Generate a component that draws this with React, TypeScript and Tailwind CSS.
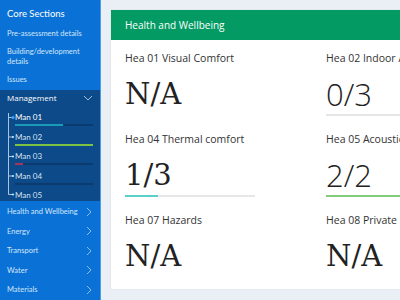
import React from "react";

const font = { fontFamily: '"Open Sans", "Noto Sans", sans-serif' };
const side = { fontFamily: 'Lato, "Open Sans", sans-serif' };

function ChevronRight() {
  return (
    <svg width="6" height="10" viewBox="0 0 6 10" className="shrink-0">
      <path d="M1 1 L5 5 L1 9" fill="none" stroke="#8dbbea" strokeWidth="1" />
    </svg>
  );
}

function ChevronDown() {
  return (
    <svg width="10" height="6" viewBox="0 0 10 6" className="shrink-0">
      <path d="M1 1 L5 5 L9 1" fill="none" stroke="#9fbfe0" strokeWidth="1" />
    </svg>
  );
}

const subs = [
  { name: "Man 01", fill: 48, color: "#1a9cb8", active: true },
  { name: "Man 02", fill: 78, color: "#7dc242" },
  { name: "Man 03", fill: 8, color: "#a5335a" },
  { name: "Man 04", fill: 0, color: "#000" },
  { name: "Man 05", fill: -1, color: "#000" },
];

const sections = ["Health and Wellbeing", "Energy", "Transport", "Water", "Materials"];

type Cell = { title: string; value: string; serif: boolean; bar?: { pct: number; color: string } };

const cells: Cell[] = [
  { title: "Hea 01 Visual Comfort", value: "N/A", serif: true },
  { title: "Hea 02 Indoor Air Quality", value: "0/3", serif: false, bar: { pct: 0, color: "#5ccfc8" } },
  { title: "Hea 04 Thermal comfort", value: "1/3", serif: true, bar: { pct: 25, color: "#5ccfc8" } },
  { title: "Hea 05 Acoustic performance", value: "2/2", serif: false, bar: { pct: 100, color: "#83cc7e" } },
  { title: "Hea 07 Hazards", value: "N/A", serif: true },
  { title: "Hea 08 Private space", value: "N/A", serif: true },
];

export default function App() {
  return (
    <div className="w-[400px] h-[300px] flex overflow-hidden bg-[#e9eff4]" style={font}>
      <aside className="w-[101px] shrink-0 h-full bg-[#0a72d6] border-r border-[#4f9ce4] flex flex-col text-white" style={side}>
        <div className="mt-[7px] pl-[7px] text-[9.5px] leading-[14px] text-white">Core Sections</div>
        <div className="mt-[7px] pl-[7px] text-[7.5px] leading-[12px] text-[#d3e5f8]">Pre-assessment details</div>
        <div className="mt-[7px] pl-[7px] text-[7.5px] leading-[10px] text-[#d3e5f8]">
          Building/development
          <br />
          details
        </div>
        <div className="mt-[7px] pl-[7px] text-[7.5px] leading-[12px] text-[#d3e5f8]">Issues</div>
        <div className="mt-[4px] bg-[#0c4a89] flex flex-col">
          <div className="h-[16px] pl-[7px] pr-[7px] flex items-center justify-between">
            <span className="text-[8px] text-white" style={font}>Management</span>
            <ChevronDown />
          </div>
          <div className="relative mt-[5px] pl-[15px] pr-[7px]">
            <svg className="absolute left-0 top-0" width="16" height="100" viewBox="0 0 16 100">
              <path d="M8.5 2 L8.5 83.5 M8.5 6.5 L13 6.5 M8.5 26 L13 26 M8.5 45.5 L13 45.5 M8.5 65 L13 65 M8.5 83.5 L13 83.5" stroke="#a9c3e0" strokeWidth="1" fill="none" />
              <circle cx="13" cy="6.5" r="1.6" fill="#3aa0ff" />
              <circle cx="13" cy="26" r="1" fill="#dbe8f6" />
              <circle cx="13" cy="45.5" r="1" fill="#dbe8f6" />
              <circle cx="13" cy="65" r="1" fill="#dbe8f6" />
              <circle cx="13" cy="83.5" r="1" fill="#dbe8f6" />
            </svg>
            {subs.map((s) => (
              <div key={s.name} className={s.fill >= 0 ? "mb-[4.5px]" : ""}>
                <div className={"text-[8px] leading-[12px] " + (s.active ? "text-white" : "text-[#d3e2f2]")}>{s.name}</div>
                {s.fill >= 0 && (
                  <div className="mt-[1px] h-[2px] w-[78px] bg-[#0a3a6e]">
                    <div className="h-full" style={{ width: s.fill, background: s.color }} />
                  </div>
                )}
              </div>
            ))}
          </div>
        </div>
        <div className="mt-[1px] flex flex-col">
          {sections.map((s) => (
            <div key={s} className="h-[19.5px] pl-[7px] pr-[8px] flex items-center justify-between">
              <span className="text-[7.5px] text-[#d3e5f8]">{s}</span>
              <ChevronRight />
            </div>
          ))}
        </div>
      </aside>
      <main className="flex-1 pl-[10px] pt-[10px] min-w-0">
        <div className="w-[420px] h-[279px] bg-white shadow-[0_0_1px_rgba(0,0,0,0.15)]">
          <div className="h-[30px] bg-[#039b63] flex items-center pl-[14px] text-white text-[10px]">Health and Wellbeing</div>
          <div className="pt-[11px] pl-[14px] grid grid-cols-[201px_201px]">
            {cells.map((c) => (
              <div key={c.title} className="h-[81px] flex flex-col">
                <div className="text-[10.5px] leading-[14px] text-[#333] whitespace-nowrap">{c.title}</div>
                <div
                  className={
                    "mt-[12px] h-[34px] leading-[34px] text-[#222] whitespace-nowrap " +
                    (c.serif ? "text-[29px]" : "text-[31px] font-light")
                  }
                  style={{ fontFamily: c.serif ? '"DejaVu Serif", serif' : '"Open Sans", sans-serif' }}
                >
                  {c.value}
                </div>
                {c.bar && (
                  <div className="mt-[3px] h-[2px] w-[130px] bg-[#e6e6e6]">
                    <div className="h-full" style={{ width: `${c.bar.pct}%`, background: c.bar.color }} />
                  </div>
                )}
              </div>
            ))}
          </div>
        </div>
      </main>
    </div>
  );
}
